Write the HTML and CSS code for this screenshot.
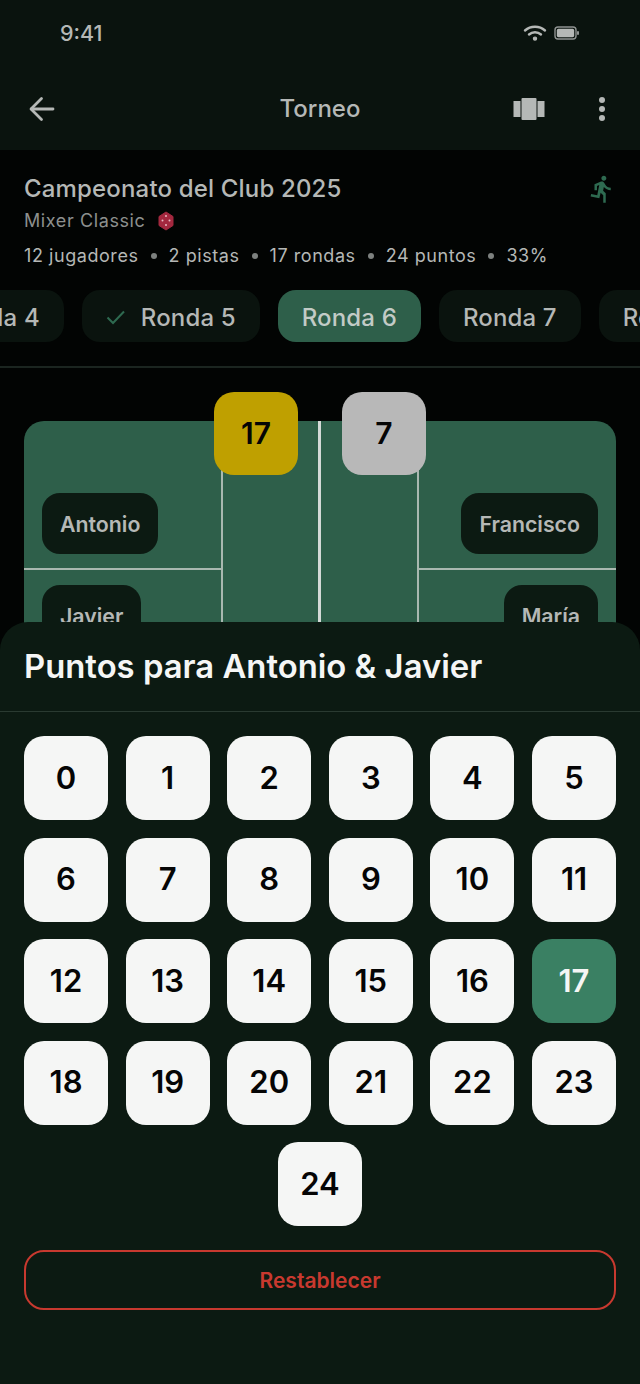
FILE: index.html
```html
<!DOCTYPE html>
<html lang="es">
<head>
  <meta charset="UTF-8" />
  <title>Torneo</title>
  <meta name="viewport" content="width=device-width, initial-scale=1" />
  <link rel="stylesheet" href="styles.css">
</head>
<body>
  <div class="screen">
    <header class="top">
      <div class="status">
        <span class="time">9:41</span>
        <div class="status-icons">
          <svg class="wifi" width="24" height="18" viewBox="0 0 24 18" fill="none" stroke="#b5b8b6" stroke-width="2.4" stroke-linecap="round">
            <path d="M2 6.5c5.6-5 14.4-5 20 0" />
            <path d="M6 10.5c3.4-3 8.6-3 12 0" />
            <circle cx="12" cy="14.6" r="1.6" fill="#b5b8b6" stroke="#b5b8b6" stroke-width="1.2" />
          </svg>
          <svg width="26" height="14" viewBox="0 0 26 14">
            <rect x="1" y="1" width="21" height="12" rx="3" fill="none" stroke="#8f9391" stroke-width="1.4" />
            <rect x="2.8" y="2.8" width="17.4" height="8.4" rx="1.6" fill="#b5b8b6" />
            <rect x="23" y="5" width="2" height="4" rx="1" fill="#8f9391" />
          </svg>
        </div>
      </div>
      <div class="appbar">
        <svg class="back" width="28" height="28" viewBox="0 0 28 28" fill="none" stroke="#b5b8b6" stroke-width="2.8" stroke-linecap="round" stroke-linejoin="round">
          <path d="M25 14H3.5" />
          <path d="M13.5 3.5 3 14l10.5 10.5" />
        </svg>
        <h1>Torneo</h1>
        <svg class="carousel" width="32" height="22" viewBox="0 0 32 22" fill="#b5b8b6">
          <rect x="0.500" y="3" width="7" height="16" />
          <rect x="8.500" y="0" width="15" height="22" rx="1" />
          <rect x="24.500" y="3" width="7" height="16" />
        </svg>
        <svg class="more" width="8" height="26" viewBox="0 0 8 26" fill="#b5b8b6">
          <circle cx="4" cy="4" r="3" />
          <circle cx="4" cy="13" r="3" />
          <circle cx="4" cy="22" r="3" />
        </svg>
      </div>
    </header>

    <section class="info">
      <div class="info-text">
        <h2>Campeonato del Club 2025</h2>
        <div class="mode">
          <span>Mixer Classic</span>
          <svg width="16" height="20" viewBox="0 0 16 20">
            <path d="M8 1 15 5.500v9L8 19 1 14.500v-9z" fill="#a3283f" stroke="#a3283f" stroke-linejoin="round" />
            <g fill="#e8b9c2">
              <circle cx="8" cy="5" r="1" />
              <circle cx="4.500" cy="9.500" r="1" />
              <circle cx="11.500" cy="9.500" r="1" />
              <circle cx="8" cy="14" r="1" />
            </g>
          </svg>
        </div>
        <p class="stats">
          <span>12 jugadores</span><i></i><span>2 pistas</span><i></i><span>17 rondas</span><i></i><span>24 puntos</span><i></i><span>33%</span>
        </p>
      </div>
      <svg class="runner" width="30" height="30" viewBox="0 0 24 24" fill="#2e6a50">
        <path d="M13.490 5.480c1.100 0 2-.9 2-2s-.9-2-2-2-2 .9-2 2 .9 2 2 2zm-3.600 13.900l1-4.400 2.100 2v6h2v-7.500l-2.100-2 .6-3c1.300 1.500 3.300 2.500 5.500 2.500v-2c-1.900 0-3.500-1-4.300-2.400l-1-1.600c-.4-.6-1-1-1.700-1-.3 0-.5.1-.8.1l-5.200 2.200v4.700h2v-3.400l1.800-.7-1.600 8.100-4.900-1-.4 2 7 1.400z" />
      </svg>
    </section>

    <nav class="rounds">
      <div class="round">Ronda 4</div>
      <div class="round">
        <svg width="20" height="16" viewBox="0 0 20 16" fill="none" stroke="#2e6a50" stroke-width="2">
          <path d="M1.500 8.500 7 14 18 2.500" />
        </svg>
        Ronda 5
      </div>
      <div class="round active">Ronda 6</div>
      <div class="round">Ronda 7</div>
      <div class="round">Ronda 8</div>
    </nav>

    <main class="match">
      <div class="court">
        <div class="side">
          <div class="box box-top"><div class="player">Antonio</div></div>
          <div class="box box-bottom"><div class="player">Javier</div></div>
        </div>
        <div class="mid"></div>
        <div class="mid mid-right"></div>
        <div class="side side-right">
          <div class="box box-top"><div class="player">Francisco</div></div>
          <div class="box box-bottom"><div class="player">María</div></div>
        </div>
        <div class="score score-a">17</div>
        <div class="score score-b">7</div>
      </div>
    </main>

    <section class="sheet">
      <h3>Puntos para Antonio &amp; Javier</h3>
      <div class="numbers">
        <button>0</button><button>1</button><button>2</button><button>3</button><button>4</button><button>5</button>
        <button>6</button><button>7</button><button>8</button><button>9</button><button>10</button><button>11</button>
        <button>12</button><button>13</button><button>14</button><button>15</button><button>16</button><button class="picked">17</button>
        <button>18</button><button>19</button><button>20</button><button>21</button><button>22</button><button>23</button>
        <button>24</button>
      </div>
      <button class="reset">Restablecer</button>
    </section>
  </div>
</body>
</html>
```

FILE: styles.css
```css
* {
  box-sizing: border-box;
}

body {
  margin: 0;
  background: #020403;
  font-family: 'Inter', 'Noto Sans', sans-serif;
  color: #b5b8b6;
}

.screen {
  position: relative;
  width: 640px;
  height: 1384px;
  overflow: hidden;
}

.top {
  height: 150px;
  background: #0a130e;
}

.status {
  height: 68px;
  padding: 20px 60px 0;
  display: flex;
  justify-content: space-between;
  align-items: flex-start;
}

.time {
  font-size: 21.5px;
  font-weight: 500;
  line-height: 26px;
}

.status-icons {
  display: flex;
  align-items: center;
  gap: 7px;
  margin-top: 4px;
}

.appbar {
  height: 82px;
  padding: 0 34px 0 28px;
  display: flex;
  align-items: center;
}

.appbar h1 {
  flex: 1;
  margin: 0;
  padding-left: 71px;
  text-align: center;
  font-size: 24px;
  font-weight: 500;
  line-height: 30px;
}

.carousel {
  margin-right: 53px;
}

.info {
  height: 140px;
  padding: 24px 23px 0 24px;
  display: flex;
  justify-content: space-between;
  align-items: flex-start;
}

.info h2 {
  margin: 0;
  font-size: 24px;
  font-weight: 500;
  line-height: 30px;
  letter-spacing: 0.17px;
}

.mode {
  margin-top: 4px;
  display: flex;
  align-items: center;
  gap: 13px;
  font-size: 18px;
  line-height: 26px;
  letter-spacing: 0.6px;
  color: #8d908e;
}

.stats {
  margin: 9px 0 0;
  display: flex;
  align-items: center;
  font-size: 18px;
  line-height: 26px;
  letter-spacing: 0.56px;
}

.stats i {
  width: 6px;
  height: 6px;
  margin: 0 12px;
  border-radius: 50%;
  background: #7d817f;
}

.runner {
  margin-top: 0;
}

.rounds {
  height: 76px;
  margin-left: -80px;
  display: flex;
  gap: 18px;
}

.round {
  flex: none;
  height: 52px;
  padding: 2px 24px 0;
  display: flex;
  align-items: center;
  gap: 15px;
  border-radius: 18px;
  background: #0a130e;
  font-size: 24px;
  font-weight: 500;
  letter-spacing: 0.15px;
  white-space: nowrap;
}

.round.active {
  background: #2e5f4a;
  color: #c2cbc6;
}

.match {
  border-top: 2px solid #1b2520;
  padding: 53px 24px 0;
}

.court {
  position: relative;
  height: 400px;
  display: flex;
  background: #2e5f4a;
  border-radius: 20px;
}

.side {
  width: 199px;
  border-right: 2px solid #a9b8b0;
}

.side-right {
  border-right: 0;
  border-left: 2px solid #a9b8b0;
}

.mid {
  flex: 1;
}

.mid-right {
  margin-left: -1px;
  border-left: 3px solid #d4dad7;
}

.box {
  display: flex;
  padding: 0 18px;
}

.side-right .box {
  justify-content: flex-end;
}

.box-top {
  height: 149px;
  align-items: flex-end;
  padding-bottom: 14px;
  border-bottom: 2px solid #a9b8b0;
}

.box-bottom {
  padding-top: 15px;
}

.player {
  height: 61px;
  padding: 0 18px;
  display: flex;
  align-items: center;
  border-radius: 18px;
  background: #0c1a12;
  font-size: 21.3px;
  font-weight: 600;
}

.score {
  position: absolute;
  top: -29px;
  width: 84px;
  height: 83px;
  padding-bottom: 2px;
  display: flex;
  align-items: center;
  justify-content: center;
  border-radius: 20px;
  font-size: 30px;
  font-weight: 600;
  color: #050505;
}

.score-a {
  left: 190px;
  background: #bfa000;
}

.score-b {
  left: 318px;
  background: #b8b8b8;
}

.sheet {
  position: absolute;
  left: 0;
  right: 0;
  top: 622px;
  bottom: 0;
  background: #0c1a12;
  border-radius: 28px 28px 0 0;
}

.sheet h3 {
  height: 90px;
  margin: 0;
  padding: 26px 24px 0;
  border-bottom: 1px solid #2a3a31;
  font-size: 32.85px;
  font-weight: 600;
  line-height: 36px;
  color: #f5f6f5;
}

.numbers {
  margin-top: 24px;
  padding: 0 24px;
  display: flex;
  flex-wrap: wrap;
  justify-content: center;
  gap: 17.6px;
}

.numbers button {
  width: 84px;
  height: 84px;
  padding: 0 0 2px;
  border: 0;
  border-radius: 20px;
  background: #f5f6f5;
  font-family: inherit;
  font-size: 31px;
  font-weight: 600;
  color: #050505;
}

.numbers .picked {
  background: #3a8063;
  color: #f5f6f5;
}

.reset {
  display: block;
  width: 592px;
  height: 60px;
  margin: 24px 24px 0;
  border: 2px solid #c8392f;
  border-radius: 20px;
  background: transparent;
  font-family: inherit;
  font-size: 21px;
  font-weight: 600;
  color: #c8392f;
}
```
